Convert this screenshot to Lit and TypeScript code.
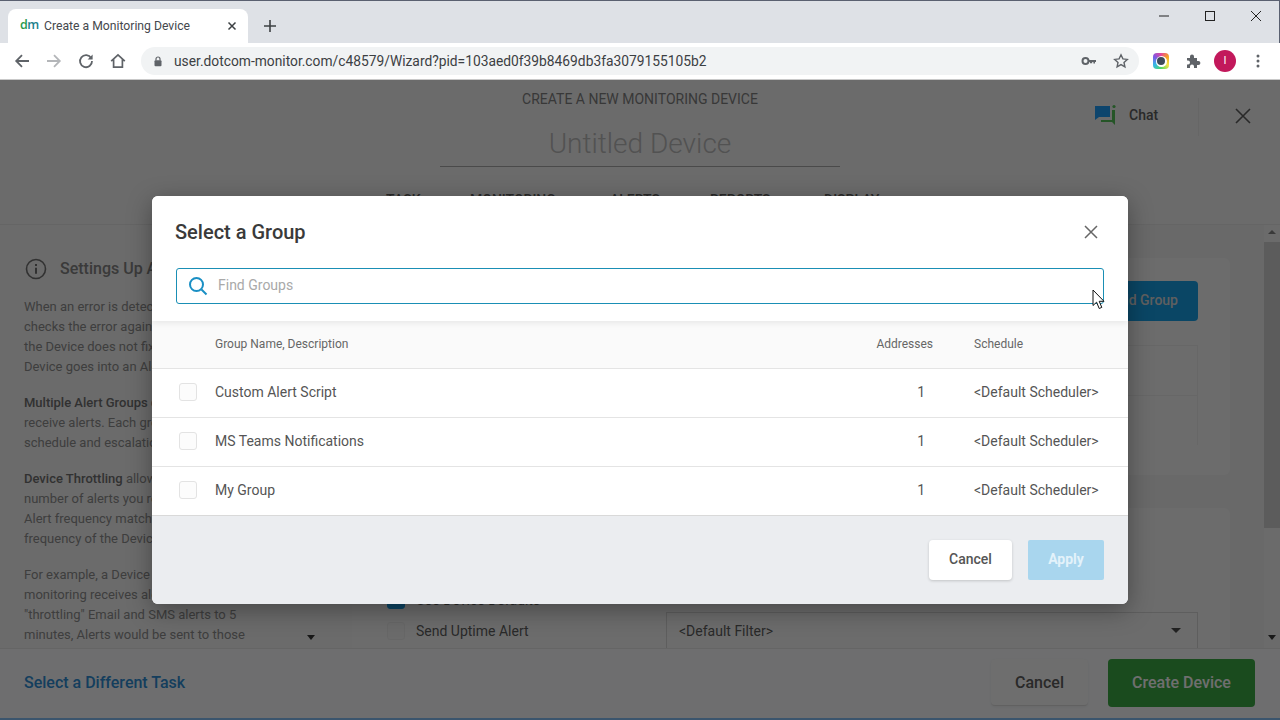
import { LitElement, html, css, svg } from "lit";
import { customElement } from "lit/decorators.js";

const leftParas = [
  ["When an error is detected, Dotcom-Monitor", "checks the error again from a second location. If", "the Device does not fix the error, the", "Device goes into an Alert state."],
  ["<b>Multiple Alert Groups</b> can be selected to", "receive alerts. Each group can have its own", "schedule and escalation options."],
  ["<b>Device Throttling</b> allows you to limit the", "number of alerts you receive. We recommend", "Alert frequency match the monitoring", "frequency of the Device."],
  ["For example, a Device with 1 minute", "monitoring receives alerts every minute. By", '"throttling" Email and SMS alerts to 5', "minutes, Alerts would be sent to those"],
];

const groups = ["Custom Alert Script", "MS Teams Notifications", "My Group"];

const ic = (size: number, body: unknown, box = 24) =>
  html`<svg class="ic" width=${size} height=${size} viewBox="0 0 ${box} ${box}">${body}</svg>`;

@customElement("app-root")
export class AppRoot extends LitElement {
  static styles = css`
    :host { display: block; width: 1280px; height: 720px; overflow: hidden; font-family: Roboto, "Liberation Sans", sans-serif; position: relative; }
    * { box-sizing: border-box; }
    .ic { display: block; flex: none; }
    .win { width: 1280px; height: 720px; display: flex; flex-direction: column; }

    .tabstrip { height: 43px; flex: none; background: #dee1e6; border-top: 1px solid #5a6070; border-right: 1px solid #5a6070; display: flex; align-items: flex-end; padding-left: 8px; }
    .tab { width: 240px; height: 34px; background: #fff; border-radius: 8px 8px 0 0; display: flex; align-items: center; padding-left: 12px; padding-right: 11px; }
    .fav { width: 24px; font: 600 12.5px/1 "Open Sans", sans-serif; letter-spacing: -.5px; color: #1d7f8c; margin-bottom: 1px; }
    .fav i { font-style: normal; color: #2a9a4a; }
    .tabtitle { flex: 1; font: 400 12.2px/1 Roboto, sans-serif; color: #45484d; white-space: nowrap; }
    .newtab { margin: 0 0 10px 15px; align-self: flex-end; }
    .spring { flex: 1; }
    .wc { width: 46px; height: 30px; display: flex; align-items: center; justify-content: center; align-self: flex-start; }

    .toolbar { height: 37px; flex: none; background: #fff; border-bottom: 1px solid #c9c9c9; display: flex; align-items: center; padding-left: 6px; }
    .nav { width: 32px; display: flex; justify-content: center; }
    .omni { width: 998px; height: 28px; margin-left: 7px; background: #f1f3f4; border-radius: 14px; display: flex; align-items: center; padding-left: 11px; padding-right: 10px; }
    .url { flex: 1; margin-left: 10px; padding-top: 1px; font: 400 13.8px/1 Roboto, sans-serif; color: #3c4043; white-space: nowrap; }
    .omni .ic + .ic { margin-left: 16px; }
    .tools { display: flex; align-items: center; }
    .tool { width: 32px; display: flex; justify-content: center; }
    .tool.dots { margin-left: 1px; }
    .tool.first { margin-left: 6px; }
    .ext { width: 16px; height: 16px; border-radius: 4px; background: conic-gradient(#e8459a, #f5a623, #f3e24b, #4cd964, #35b8e8, #7a5be6, #e8459a); display: flex; align-items: center; justify-content: center; }
    .ext i { width: 11px; height: 11px; border-radius: 50%; background: #fff; display: flex; align-items: center; justify-content: center; }
    .ext i::after { content: ""; width: 8px; height: 8px; border-radius: 50%; background: #3d4a5a; }
    .avatar { width: 22px; height: 22px; border-radius: 50%; background: #c2185b; color: #fff; font: 400 11px/22px Roboto, sans-serif; text-align: center; }

    .page { flex: 1; min-height: 0; position: relative; display: flex; flex-direction: column; background: #dcdcdc; border-bottom: 2px solid #7ab0e0; }
    .phead { height: 145px; flex: none; background: #dcdcdc; border-bottom: 1px solid #cfcfcf; display: flex; flex-direction: column; align-items: center; padding-top: 12px; position: relative; overflow: hidden; }
    .kicker { font: 400 14px/15px Roboto, sans-serif; color: #747474; text-transform: uppercase; height: 15px; }
    .dname { width: 400px; height: 45px; margin-top: 15px; padding-top: 3px; border-bottom: 1px solid #999; text-align: center; font: 300 28px/38px Roboto, sans-serif; color: #a8a8a8; }
    .steps { position: absolute; left: 386px; top: 112px; display: flex; font: 500 14px/16px Roboto, sans-serif; color: #555; }
    .steps span:nth-child(1) { width: 84px; }
    .steps span:nth-child(2) { width: 140px; }
    .steps span:nth-child(3) { width: 100px; }
    .steps span:nth-child(4) { width: 114px; }
    .chat { position: absolute; left: 1094px; top: 18px; height: 38px; width: 105px; display: flex; align-items: center; gap: 12px; border-right: 1px solid #d2d2d2; font: 500 14px/1 Roboto, sans-serif; color: #555; padding-bottom: 4px; }
    .pclose { position: absolute; left: 1234px; top: 27px; }

    .pbody { flex: 1; min-height: 0; display: flex; overflow: hidden; }
    .left { width: 352px; flex: none; height: 423px; background: #dcdcdc; padding: 33px 40px 0 24px; position: relative; overflow: hidden; font: 400 13px/20px Roboto, sans-serif; color: #808080; white-space: nowrap; }
    .lhead { display: flex; align-items: center; gap: 13px; font: 500 16px/22px Roboto, sans-serif; color: #777; margin-left: 1px; margin-bottom: 17px; }
    .left p { margin: 0 0 16px; }
    .left b { font-weight: 500; color: #666; }
    .left .more { position: absolute; left: 307px; bottom: 8px; width: 0; height: 0; border: 4px solid transparent; border-top: 5px solid #333; border-bottom: 0; }

    .main { flex: 1; min-width: 0; padding: 33px 34px 0 0; overflow: hidden; display: flex; flex-direction: column; gap: 33px; background: #d8d8d8; }
    .card { background: #dfdfdf; border-radius: 6px; flex: none; padding: 23px 32px 0 35px; }
    .c1 { height: 217px; }
    .c2 { height: 160px; padding-top: 76px; }
    .addbar { display: flex; justify-content: flex-end; }
    .add { height: 40px; padding: 0 20px; background: #1590d0; border-radius: 4px; color: #c4c4c4; font: 500 14px/38px Roboto, sans-serif; }
    .trow { height: 50px; border: 1px solid #d4d4d4; border-bottom: 0; }
    .rows { margin-top: 24px; }
    .opt { height: 31px; display: flex; align-items: center; font: 400 14px/1 Roboto, sans-serif; color: #555; }
    .cb { width: 18px; height: 18px; border-radius: 3px; background: #dcdcdc; border: 1px solid #d4d4d4; margin-right: 11px; flex: none; }
    .cb.on { background: #1a8fd0; border-color: #1a8fd0; }
    .sel { margin-left: auto; width: 532px; height: 36px; border: 1px solid #c2c2c2; border-bottom: 0; display: flex; align-items: center; justify-content: space-between; padding: 0 16px 0 12px; margin-top: -1px; }
    .tri { width: 0; height: 0; border: 5px solid transparent; border-top: 5px solid #444; border-bottom: 0; }

    .sbar { width: 16px; flex: none; background: #dcdcdc; display: flex; flex-direction: column; align-items: center; height: 423px; padding-top: 5px; }
    .sbar .up { width: 0; height: 0; border: 4px solid transparent; border-bottom: 4px solid #777; border-top: 0; }
    .sbar .thumb { width: 16px; height: 286px; background: #bdbdbd; margin-top: 8px; }
    .sbar .dn { width: 0; height: 0; border: 4px solid transparent; border-top: 5px solid #333; border-bottom: 0; margin-top: auto; margin-bottom: 8px; }

    .pfoot { height: 70px; flex: none; background: #e2e3e5; border-top: 1px solid #cfcfcf; display: flex; align-items: center; padding: 0 25px 2px 24px; }
    .difftask { font: 500 16px/1 Roboto, sans-serif; color: #2b7fc0; margin-right: auto; }
    .btn-c { width: 97px; height: 47px; background: #e2e2e2; border-bottom: 1px solid #c8c8c8; box-shadow: 0 1px 3px rgba(0,0,0,.06); border-radius: 4px; font: 500 16px/47px Roboto, sans-serif; text-align: center; color: #555; margin-right: 20px; }
    .btn-g { width: 147px; height: 48px; background: #369a3e; border-radius: 4px; font: 500 16px/48px Roboto, sans-serif; text-align: center; color: #e4e4e4; }

    .overlay { position: absolute; inset: 0 0 -2px 0; background: rgba(0,0,0,.515); display: flex; align-items: center; justify-content: center; }
    .dialog { width: 976px; height: 408px; background: #fff; border-radius: 6px; overflow: hidden; display: flex; flex-direction: column; box-shadow: 0 6px 24px rgba(0,0,0,.35); }
    .dhead { height: 125px; flex: none; background: #fff; padding: 24px 24px 0; box-shadow: 0 2px 6px rgba(0,0,0,.08); position: relative; z-index: 1; }
    .dtop { display: flex; justify-content: space-between; align-items: center; height: 24px; margin-bottom: 24px; }
    .dtop .ic { margin-right: 6px; }
    .dtitle { font: 500 20px/24px Roboto, sans-serif; color: #3a3a3a; margin-left: -1px; }
    .search { height: 36px; border: 1px solid #1a8fb5; border-radius: 3px; display: flex; align-items: center; gap: 10px; padding-left: 11px; font: 400 14px/1 Roboto, sans-serif; color: #a9a9a9; }
    .search span { margin-bottom: 2px; }
    .row { display: grid; grid-template-columns: 63px 1fr 120px 154px; align-items: center; border-bottom: 1px solid #e4e4e4; font: 400 14px/1 Roboto, sans-serif; color: #555; height: 49px; background: #fff; padding-bottom: 2px; }
    .row.th { height: 48px; background: #fafafa; font-size: 12px; color: #666; }
    .row .num { text-align: right; padding-right: 49px; }
    .row.th .num { padding-right: 41px; }
    .row.last { border-bottom-color: #d9d9d9; }
    .box { width: 18px; height: 18px; margin-left: 27px; border: 1px solid #e3e3e3; border-radius: 3px; background: #fcfcfc; }
    .dfoot { flex: 1; background: #ebedf0; display: flex; justify-content: flex-end; align-items: flex-start; gap: 16px; padding: 24px 24px 0; }
    .bcancel { width: 83px; height: 40px; background: #fff; border-radius: 4px; box-shadow: 0 1px 3px rgba(0,0,0,.18); font: 500 14px/38px Roboto, sans-serif; text-align: center; color: #555; }
    .bapply { width: 76px; height: 40px; background: #a9d6ee; border-radius: 2px; font: 700 14px/38px Roboto, sans-serif; text-align: center; color: #e3f2fa; }
    .arrow-mark { position: absolute; left: 1092px; top: 289px; z-index: 5; display: block; }
  `;

  render() {
    const g = "#5f6368";
    return html`<div class="win">
      <div class="tabstrip">
        <div class="tab">
          <span class="fav"><i>d</i>m</span>
          <span class="tabtitle">Create a Monitoring Device</span>
          ${ic(10, svg`<path d="M1.5 1.5l7 7M8.5 1.5l-7 7" stroke="#3c4043" stroke-width="1.5" fill="none"/>`, 10)}
        </div>
        <span class="newtab">${ic(14, svg`<path d="M7 1v12M1 7h12" stroke="#3c4043" stroke-width="1.6" fill="none"/>`, 14)}</span>
        <span class="spring"></span>
        <span class="wc">${ic(12, svg`<path d="M1 6h10" stroke="#222" stroke-width="1" fill="none"/>`, 12)}</span>
        <span class="wc">${ic(12, svg`<rect x="1.5" y="1.5" width="9" height="9" stroke="#222" stroke-width="1" fill="none"/>`, 12)}</span>
        <span class="wc">${ic(12, svg`<path d="M1 1l10 10M11 1L1 11" stroke="#222" stroke-width="1" fill="none"/>`, 12)}</span>
      </div>

      <div class="toolbar">
        <span class="nav">${ic(16, svg`<path d="M15 8H2.5M8 2.2L2.2 8 8 13.8" stroke="${g}" stroke-width="1.8" fill="none"/>`, 16)}</span>
        <span class="nav">${ic(16, svg`<path d="M1 8h12.5M8 2.2L13.8 8 8 13.8" stroke="#b4b6b9" stroke-width="1.8" fill="none"/>`, 16)}</span>
        <span class="nav">${ic(16, svg`<path d="M13.2 5.2A6 6 0 1 0 14 8" stroke="${g}" stroke-width="1.8" fill="none"/><path d="M14.6 1.4v5h-5z" fill="${g}"/>`, 16)}</span>
        <span class="nav">${ic(16, svg`<path d="M1.2 8.2L8 1.8l6.8 6.4M3.6 6.6v7.6h8.8V6.6" stroke="${g}" stroke-width="1.7" fill="none"/>`, 16)}</span>
        <div class="omni">
          ${ic(12, svg`<path d="M4 5.5V4a2 2 0 0 1 4 0v1.5" stroke="${g}" stroke-width="1.2" fill="none"/><rect x="2.5" y="5.2" width="7" height="6" rx="1" fill="${g}"/>`, 12)}
          <span class="url">user.dotcom-monitor.com/c48579/Wizard?pid=103aed0f39b8469db3fa3079155105b2</span>
          ${ic(16, svg`<circle cx="4.5" cy="8" r="3" stroke="${g}" stroke-width="2" fill="none"/><path d="M7.5 7h7.5v2h-1v1.6h-1.6V9h-1.2v1.2H9V9H7.5z" fill="${g}"/>`, 16)}
          ${ic(16, svg`<path d="M8 1.8l1.9 4.1 4.4.5-3.3 3 .9 4.4L8 11.6l-3.9 2.2.9-4.4-3.3-3 4.4-.5z" stroke="${g}" stroke-width="1.4" fill="none"/>`, 16)}
        </div>
        <div class="tools">
          <span class="tool first"><span class="ext"><i></i></span></span>
          <span class="tool">${ic(16, svg`<path d="M2 5h3V3.6a2 2 0 0 1 4 0V5h3v3h1.4a2 2 0 0 1 0 4H12v3H9v-1.4a2 2 0 0 0-4 0V15H2v-3.4h1a2 2 0 0 0 0-4H2z" fill="${g}"/>`, 16)}</span>
          <span class="tool"><span class="avatar">I</span></span>
          <span class="tool dots">${ic(16, svg`<circle cx="8" cy="3" r="1.5" fill="${g}"/><circle cx="8" cy="8" r="1.5" fill="${g}"/><circle cx="8" cy="13" r="1.5" fill="${g}"/>`, 16)}</span>
        </div>
      </div>

      <div class="page">
        <div class="phead">
          <div class="kicker">Create a new monitoring device</div>
          <div class="dname">Untitled Device</div>
          <div class="steps"><span>TASK</span><span>MONITORING</span><span>ALERTS</span><span>REPORTS</span><span>DISPLAY</span></div>
          <div class="chat">
            ${ic(23, svg`<path d="M1 2h15v11H5l-4 3z" fill="#1b8fe0"/><path d="M18 6h3v15l-3-3H7v-2h11z" fill="#4caf50"/><circle cx="20" cy="2.5" r="1.6" fill="#4caf50"/>`, 23)}
            <span>Chat</span>
          </div>
          <span class="pclose">${ic(18, svg`<path d="M2 2l14 14M16 2L2 16" stroke="#555" stroke-width="1.6" fill="none"/>`, 18)}</span>
        </div>

        <div class="pbody">
          <div class="left">
            <div class="lhead">
              ${ic(22, svg`<circle cx="11" cy="11" r="9.5" stroke="#666" stroke-width="1.6" fill="none"/><path d="M11 9.8v6M11 6v2" stroke="#666" stroke-width="2" fill="none"/>`, 22)}
              <span>Settings Up Alerts</span>
            </div>
            ${leftParas.map((p) => html`<p>${p.map((l) => this.line(l))}</p>`)}
            <span class="more"></span>
          </div>

          <div class="main">
            <div class="card c1">
              <div class="addbar"><div class="add">Add Group</div></div>
              <div class="rows"><div class="trow"></div><div class="trow"></div></div>
            </div>
            <div class="card c2">
              <div class="opt"><span class="cb on"></span><span>Use Device Defaults</span></div>
              <div class="opt"><span class="cb"></span><span>Send Uptime Alert</span>
                <div class="sel"><span>&lt;Default Filter&gt;</span><span class="tri"></span></div>
              </div>
            </div>
          </div>

          <div class="sbar"><span class="up"></span><span class="thumb"></span><span class="dn"></span></div>
        </div>

        <div class="pfoot">
          <span class="difftask">Select a Different Task</span>
          <div class="btn-c">Cancel</div>
          <div class="btn-g">Create Device</div>
        </div>

        <div class="overlay">
          <div class="dialog">
            <div class="dhead">
              <div class="dtop">
                <span class="dtitle">Select a Group</span>
                ${ic(14, svg`<path d="M1 1l12 12M13 1L1 13" stroke="#666" stroke-width="1.5" fill="none"/>`, 14)}
              </div>
              <div class="search">
                ${ic(20, svg`<circle cx="8.5" cy="8.5" r="6.5" stroke="#1a8fc4" stroke-width="2" fill="none"/><path d="M13.5 13.5l5 5" stroke="#1a8fc4" stroke-width="2" fill="none"/>`, 20)}
                <span>Find Groups</span>
              </div>
            </div>
            <div class="row th"><span></span><span>Group Name, Description</span><span class="num">Addresses</span><span>Schedule</span></div>
            ${groups.map((n, i) => html`<div class="row ${i === 2 ? "last" : ""}"><span class="box"></span><span>${n}</span><span class="num">1</span><span>&lt;Default Scheduler&gt;</span></div>`)}
            <div class="dfoot"><div class="bcancel">Cancel</div><div class="bapply">Apply</div></div>
          </div>
        </div>
      </div>
    </div>
    <svg class="arrow-mark" width="13" height="21" viewBox="0 0 13 21"><path d="M1 1v15.5l3.6-3.3 2.6 6.3 2.6-1.1-2.6-6.1h4.8z" fill="#fff" stroke="#111" stroke-width="1"/></svg>`;
  }

  line(s: string) {
    const m = s.match(/^<b>(.*)<\/b>(.*)$/);
    return m ? html`<b>${m[1]}</b>${m[2]}<br />` : html`${s}<br />`;
  }
}
